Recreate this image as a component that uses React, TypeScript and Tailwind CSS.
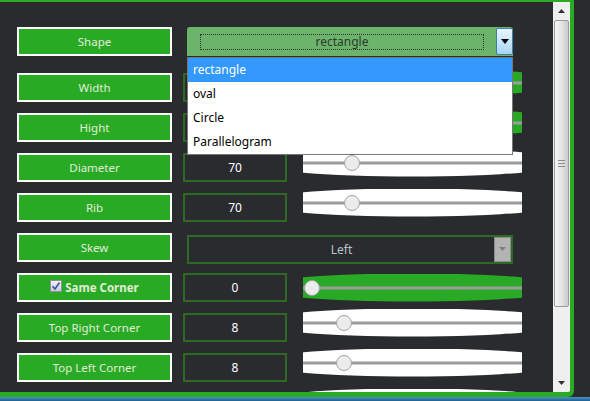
import React from "react";

const FONT = { fontFamily: '"Noto Sans", "Open Sans", sans-serif' };

function Label({ children }: { children?: React.ReactNode }) {
  return (
    <div className="flex h-[29px] w-[155px] shrink-0 items-center justify-center border-2 border-white bg-[#29aa25] text-[11.5px] text-[#e0ecd9]">
      {children}
    </div>
  );
}

function NumBox({ value }: { value?: string }) {
  return (
    <div className="ml-[11px] flex h-[29px] w-[104px] shrink-0 items-center justify-center border-2 border-[#2f6a24] text-[12px] text-white">
      {value}
    </div>
  );
}

function Slider({ pos, green, up }: { pos: number; green?: boolean; up?: boolean }) {
  return (
    <div
      className={
        "relative ml-[16px] h-[28px] w-[219px] shrink-0 [clip-path:ellipse(72%_50%_at_50%_50%)] " +
        (green ? "bg-[#29aa25] " : "bg-white ") +
        (up ? "-translate-y-[5px]" : "")
      }
    >
      <div className="absolute left-0 right-0 top-1/2 h-[3px] -translate-y-1/2 bg-[#9c9c9c]" />
      <div
        className="absolute top-1/2 h-[16px] w-[16px] -translate-y-1/2 rounded-full border border-[#a3a3a3] bg-[#ececec]"
        style={{ left: pos }}
      />
    </div>
  );
}

function Row({ children, first }: { children: React.ReactNode; first?: boolean }) {
  return <div className={"flex h-[29px] items-center " + (first ? "" : "mt-[11px]")}>{children}</div>;
}

function ScrollBar() {
  return (
    <div className="flex h-full w-[17px] shrink-0 flex-col bg-[#efefef]">
      <div className="flex h-[18px] items-center justify-center">
        <svg width="7" height="4" viewBox="0 0 7 4">
          <path d="M0 4 L3.5 0 L7 4 Z" fill="#333" />
        </svg>
      </div>
      <div className="mx-[1px] flex h-[287px] items-center justify-center rounded-[2px] border border-[#9a9a9a] bg-gradient-to-r from-[#f6f6f6] via-[#e4e4e4] to-[#cbcbcb]">
        <div className="flex flex-col gap-[2px]">
          <div className="h-[1px] w-[7px] bg-[#8a8a8a]" />
          <div className="h-[1px] w-[7px] bg-[#8a8a8a]" />
          <div className="h-[1px] w-[7px] bg-[#8a8a8a]" />
        </div>
      </div>
      <div className="flex-1" />
      <div className="flex h-[18px] items-center justify-center">
        <svg width="7" height="4" viewBox="0 0 7 4">
          <path d="M0 0 L3.5 4 L7 0 Z" fill="#333" />
        </svg>
      </div>
    </div>
  );
}

export default function App() {
  return (
    <div className="flex h-[401px] w-[590px] flex-col overflow-hidden bg-[#2a2b2f]" style={FONT}>
      <div className="flex h-[397px] w-[574px] shrink-0 overflow-hidden rounded-br-[6px] border-b-[5px] border-r-4 border-t-2 border-[#2aaa25]">
        <div className="relative flex-1 overflow-hidden pl-[17px] pt-[25px]">
          <Row first>
            <Label>Shape</Label>
            <div className="ml-[15px] flex h-[29px] w-[326px] shrink-0 rounded-t-[3px] bg-[#6cb46c]">
              <div className="flex flex-1 items-start pl-[13px] pt-[7px]">
                <div className="flex h-[16px] w-[284px] items-center justify-center border border-dotted border-[#333] text-[12px] text-[#2e3a2e]">
                  rectangle
                </div>
              </div>
              <div className="mt-[1px] flex h-[27px] w-[17px] items-center justify-center rounded-[2px] border border-[#3c7fb1] bg-gradient-to-b from-[#eaf6fd] to-[#a7d6f4]">
                <svg width="8" height="5" viewBox="0 0 8 5">
                  <path d="M0 0 L8 0 L4 5 Z" fill="#000" />
                </svg>
              </div>
            </div>
          </Row>
          <div className="mt-[17px] flex h-[29px] items-center">
            <Label>Width</Label>
            <NumBox />
            <Slider pos={60} green up />
          </div>
          <Row>
            <Label>Hight</Label>
            <NumBox />
            <Slider pos={60} green up />
          </Row>
          <Row>
            <Label>Diameter</Label>
            <NumBox value="70" />
            <Slider pos={41} up />
          </Row>
          <Row>
            <Label>Rib</Label>
            <NumBox value="70" />
            <Slider pos={41} up />
          </Row>
          <Row>
            <Label>Skew</Label>
            <div className="ml-[15px] mt-[3px] flex h-[29px] w-[326px] shrink-0 border-2 border-[#2f6a24]">
              <div className="flex flex-1 items-center justify-center pt-[1px] text-[12px] text-[#b8c4cc]">Left</div>
              <div className="flex h-full w-[17px] items-center justify-center border border-[#8c8c8c] bg-[#b3b3b3]">
                <svg width="7" height="4" viewBox="0 0 7 4">
                  <path d="M0 0 L7 0 L3.5 4 Z" fill="#7e7e7e" />
                </svg>
              </div>
            </div>
          </Row>
          <Row>
            <Label>
              <span className="flex items-center gap-[3px]">
                <span className="flex h-[12px] w-[12px] -translate-y-[2px] items-center justify-center border border-[#8f8f9a] bg-gradient-to-b from-[#f4f4f8] to-[#c9cbd6]">
                  <svg width="10" height="10" viewBox="0 0 10 10">
                    <path d="M1.5 5.2 L4 8 L8.5 1.5" stroke="#3a4fa8" strokeWidth="1.6" fill="none" />
                  </svg>
                </span>
                <span className="font-bold">Same Corner</span>
              </span>
            </Label>
            <NumBox value="0" />
            <Slider pos={1} green />
          </Row>
          <Row>
            <Label>Top Right Corner</Label>
            <NumBox value="8" />
            <Slider pos={33} up />
          </Row>
          <Row>
            <Label>Top Left Corner</Label>
            <NumBox value="8" />
            <Slider pos={33} up />
          </Row>
          <Row>
            <Label />
            <NumBox />
            <Slider pos={33} up />
          </Row>

          <div className="absolute left-[187px] top-[55px] w-[326px] border border-[#767676] bg-white text-[12px] text-black">
            <div className="flex h-[24px] items-center bg-[#3399ff] pl-[5px] text-white">rectangle</div>
            <div className="flex h-[24px] items-center pl-[5px]">oval</div>
            <div className="flex h-[24px] items-center pl-[5px]">Circle</div>
            <div className="flex h-[24px] items-center pl-[5px]">Parallelogram</div>
          </div>
        </div>
        <ScrollBar />
      </div>
      <div className="h-[4px] w-full bg-gradient-to-b from-[#4a92c6] to-[#1e5f8f]" />
    </div>
  );
}
